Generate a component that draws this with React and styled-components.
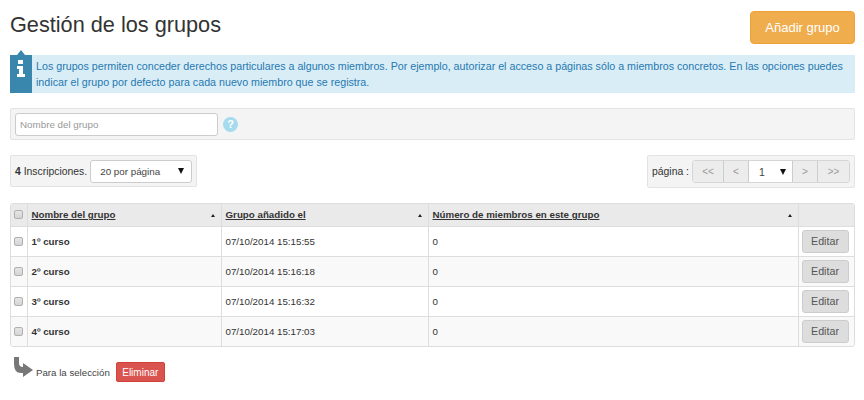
import React from 'react';
import styled, { createGlobalStyle } from 'styled-components';

const GlobalStyle = createGlobalStyle`
  html, body {
    margin: 0;
    padding: 0;
    background: #fff;
  }
  body {
    font-family: "Liberation Sans", Arial, sans-serif;
    font-size: 10.5px;
    color: #333;
  }
  * {
    box-sizing: border-box;
  }
`;

const Page = styled.div`
  width: 864px;
  height: 400px;
  padding: 11px 9px 0 10px;
  overflow: hidden;
`;

const Header = styled.div`
  display: flex;
  justify-content: space-between;
  align-items: flex-start;
  height: 44px;
`;

const Title = styled.h1`
  margin: 0;
  font-size: 21.7px;
  font-weight: 400;
  line-height: 27px;
  color: #333;
`;

const AddButton = styled.button`
  width: 105px;
  height: 33px;
  border: 1px solid #eea236;
  border-radius: 4px;
  background: #f0ad4e;
  color: #fff;
  font: 13px "Liberation Sans", Arial, sans-serif;
  padding: 0;
`;

const Notice = styled.div`
  position: relative;
  height: 38px;
  background: #d9edf7;
  color: #2679b0;
  padding: 4px 8px 0 26px;
  font-size: 10.7px;
  line-height: 15.5px;
`;

const NoticeBadge = styled.div`
  position: absolute;
  left: 0;
  top: -5px;
  width: 22px;
  height: 43px;
`;

const FilterBar = styled.div`
  display: flex;
  align-items: center;
  gap: 5px;
  height: 32px;
  margin-top: 15px;
  padding: 0 4px;
  background: #f4f4f4;
  border: 1px solid #e3e3e3;
  border-radius: 2px;
`;

const SearchInput = styled.input`
  width: 203px;
  height: 23px;
  padding: 0 4px;
  background: #fff;
  border: 1px solid #ccc;
  border-radius: 3px;
  font: 9.8px "Liberation Sans", Arial, sans-serif;
  &::placeholder {
    color: #999;
    opacity: 1;
  }
`;

const HelpDot = styled.span`
  display: flex;
  align-items: center;
  justify-content: center;
  width: 15px;
  height: 15px;
  border-radius: 50%;
  background: #a6dbed;
  color: #fff;
  font-size: 11px;
  font-weight: 700;
`;

const PagerRow = styled.div`
  display: flex;
  justify-content: space-between;
  margin-top: 15px;
`;

const PagerBox = styled.div`
  display: flex;
  align-items: center;
  gap: 3px;
  height: ${p => p.$height}px;
  padding: 0 4px;
  background: #f4f4f4;
  border: 1px solid #e3e3e3;
  border-radius: 2px;
  font-size: 10.4px;
`;

const Strong = styled.b`
  font-weight: 700;
`;

const FakeSelect = styled.div`
  display: flex;
  align-items: center;
  justify-content: space-between;
  width: ${p => p.$width}px;
  height: 23px;
  padding: 0 7px 0 9px;
  background: #fff;
  border: 1px solid #ccc;
  border-radius: 3px;
  font-size: 9.8px;
  color: #444;
`;

const Caret = styled.span`
  width: 0;
  height: 0;
  border-left: 3px solid transparent;
  border-right: 3px solid transparent;
  border-top: 6px solid #111;
`;

const PageButtons = styled.div`
  display: flex;
  height: 23px;
  border: 1px solid #d5d5d5;
  border-radius: 3px;
  overflow: hidden;
`;

const PageButton = styled.div`
  display: flex;
  align-items: center;
  justify-content: center;
  width: ${p => p.$width}px;
  background: #ececec;
  color: #999;
  font-size: 10px;
  border-right: 1px solid #ccc;
  &:last-child {
    border-right: 0;
  }
`;

const PageSelect = styled(FakeSelect)`
  border: 0;
  border-right: 1px solid #ccc;
  border-radius: 0;
  height: 21px;
  padding: 0 6px 0 10px;
  font-size: 10.5px;
`;

const TableBox = styled.div`
  margin-top: 15px;
  border: 1px solid #ddd;
  border-radius: 3px;
  overflow: hidden;
`;

const Table = styled.table`
  width: 100%;
  border-collapse: collapse;
  table-layout: fixed;
  font-size: 9.75px;
  color: #333;
`;

const HeadCell = styled.th`
  position: relative;
  height: 22px;
  padding: 0 4px;
  background: #eaeaea;
  border-left: 1px solid #ddd;
  border-bottom: 1px solid #ddd;
  text-align: left;
  font-size: 9.75px;
  font-weight: 700;
  text-decoration: underline;
  &:first-child {
    border-left: 0;
  }
`;

const SortMark = styled.span`
  position: absolute;
  right: 6px;
  top: 10px;
  width: 0;
  height: 0;
  border-left: 2.5px solid transparent;
  border-right: 2.5px solid transparent;
  border-bottom: 3px solid #222;
`;

const Row = styled.tr`
  background: ${p => (p.$odd ? '#f9f9f9' : '#fff')};
`;

const Cell = styled.td`
  height: 30px;
  padding: 0 4px;
  border-left: 1px solid #ddd;
  border-top: 1px solid #ddd;
  font-size: 9.75px;
  &:first-child {
    border-left: 0;
  }
  tr:first-child > & {
    border-top: 0;
  }
`;

const CheckCell = styled(Cell)`
  padding: 0 0 0 3px;
`;

const ActionCell = styled(Cell)`
  padding: 0 3px;
`;

const CheckHead = styled(HeadCell)`
  padding: 0 0 0 3px;
`;

const Check = styled.span`
  display: block;
  width: 9px;
  height: 9px;
  background: linear-gradient(#e6e6e6, #d4d4d4);
  border: 1px solid #b0b0b0;
  border-radius: 2px;
`;

const EditButton = styled.button`
  display: block;
  width: 47px;
  height: 23px;
  padding: 0;
  background: #ddd;
  border: 1px solid #ccc;
  border-radius: 3px;
  color: #555;
  font: 10.7px "Liberation Sans", Arial, sans-serif;
`;

const Footer = styled.div`
  display: flex;
  align-items: center;
  height: 24px;
  margin-top: 13px;
  font-size: 9.7px;
  color: #444;
`;

const FooterArrow = styled.svg`
  align-self: flex-start;
  width: 21px;
  height: 22px;
  margin: -4px 2px 0 3px;
`;

const DeleteButton = styled.button`
  width: 49px;
  height: 20px;
  margin-left: 6px;
  padding: 0;
  background: #d9534f;
  border: 1px solid #d43f3a;
  border-radius: 2px;
  color: #fff;
  font: 10px "Liberation Sans", Arial, sans-serif;
`;

const groups = [
  { name: '1º curso', date: '07/10/2014 15:15:55' },
  { name: '2º curso', date: '07/10/2014 15:16:18' },
  { name: '3º curso', date: '07/10/2014 15:16:32' },
  { name: '4º curso', date: '07/10/2014 15:17:03' },
];

export default function App() {
  return (
    <Page>
      <GlobalStyle />
      <Header>
        <Title>Gestión de los grupos</Title>
        <AddButton>Añadir grupo</AddButton>
      </Header>
      <Notice>
        <NoticeBadge>
          <svg width="22" height="43" viewBox="0 0 22 43">
            <path d="M0 5 L7 5 L11 0 L15 5 L22 5 L22 43 L0 43 Z" fill="#3a87ad" />
            <rect x="8" y="10" width="5" height="4" fill="#fff" />
            <path d="M7 16 H13 V24 H15 V27 H7 V24 H9 V19 H7 Z" fill="#fff" />
          </svg>
        </NoticeBadge>
        Los grupos permiten conceder derechos particulares a algunos miembros. Por ejemplo, autorizar el acceso a páginas sólo a miembros concretos. En las opciones puedes indicar el grupo por defecto para cada nuevo miembro que se registra.
      </Notice>
      <FilterBar>
        <SearchInput placeholder="Nombre del grupo" />
        <HelpDot>?</HelpDot>
      </FilterBar>
      <PagerRow>
        <PagerBox $height={32}>
          <span><Strong>4</Strong> Inscripciones.</span>
          <FakeSelect $width={102}>20 por página<Caret /></FakeSelect>
        </PagerBox>
        <PagerBox $height={33}>
          <span>página :</span>
          <PageButtons>
            <PageButton $width={31}>&lt;&lt;</PageButton>
            <PageButton $width={25}>&lt;</PageButton>
            <PageSelect $width={44}>1<Caret /></PageSelect>
            <PageButton $width={25}>&gt;</PageButton>
            <PageButton $width={31}>&gt;&gt;</PageButton>
          </PageButtons>
        </PagerBox>
      </PagerRow>
      <TableBox>
        <Table>
          <colgroup>
            <col width="16" />
            <col width="194" />
            <col width="207" />
            <col width="370" />
            <col width="56" />
          </colgroup>
          <thead>
            <tr>
              <CheckHead><Check /></CheckHead>
              <HeadCell>Nombre del grupo<SortMark /></HeadCell>
              <HeadCell>Grupo añadido el<SortMark /></HeadCell>
              <HeadCell>Número de miembros en este grupo<SortMark /></HeadCell>
              <HeadCell />
            </tr>
          </thead>
          <tbody>
            {groups.map((group, i) => (
              <Row key={group.name} $odd={i % 2 === 1}>
                <CheckCell><Check /></CheckCell>
                <Cell><Strong>{group.name}</Strong></Cell>
                <Cell>{group.date}</Cell>
                <Cell>0</Cell>
                <ActionCell><EditButton>Editar</EditButton></ActionCell>
              </Row>
            ))}
          </tbody>
        </Table>
      </TableBox>
      <Footer>
        <FooterArrow viewBox="0 0 21 22">
          <path d="M1 1 H6 V7 Q6 11 10 11 V7 L20 14 L10 21 V17 H8 Q1 17 1 8 Z" fill="#777" />
        </FooterArrow>
        Para la selección
        <DeleteButton>Eliminar</DeleteButton>
      </Footer>
    </Page>
  );
}
